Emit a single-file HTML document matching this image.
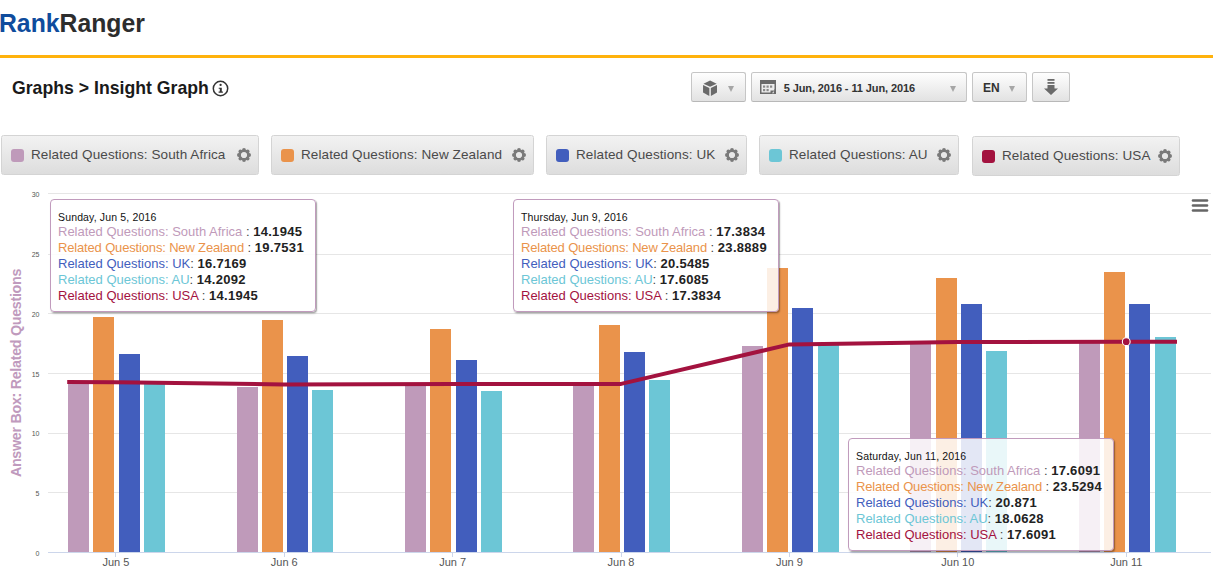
<!DOCTYPE html>
<html><head><meta charset="utf-8"><style>
*{box-sizing:border-box}
html,body{margin:0;padding:0;background:#fff;width:1213px;height:585px;overflow:hidden;position:relative;font-family:"Liberation Sans", sans-serif}
.abs{position:absolute}
.logo{position:absolute;left:-0.6px;top:8px;font-size:25px;font-weight:bold;letter-spacing:0px;line-height:30px;transform:scaleX(0.99);transform-origin:0 0}
.rule{position:absolute;left:0;top:55px;width:1213px;height:3px;background:#ffb20c}
.h1{position:absolute;left:12px;top:76.5px;font-size:19px;font-weight:bold;color:#1a1a1a;line-height:22px;white-space:nowrap;transform:scaleX(0.93);transform-origin:0 0}
.btn{position:absolute;top:72px;height:30px;border:1px solid #c6c6c6;border-bottom-color:#b8b8b8;border-radius:2.5px;background:linear-gradient(#fefefe,#e2e2e2);}
.tri{position:absolute;width:0;height:0;border-left:3.5px solid transparent;border-right:3.5px solid transparent;border-top:6px solid #a6a6a6}
.lg{position:absolute;height:40px;border:1px solid #d4d4d4;border-radius:2.5px;background:linear-gradient(#f2f2f2,#dddddd);white-space:nowrap}
.sw{position:absolute;left:8.8px;top:12.5px;width:13.7px;height:13.8px;border-radius:3px}
.lt{position:absolute;left:29px;top:10.5px;font-size:13.5px;line-height:16px;color:#4a4a4a;letter-spacing:0.1px}
.gear{position:absolute;right:7px;top:12px;width:14px;height:14px}
.gear svg{display:block}
.tt{position:absolute;border:1px solid #c19bbd;border-radius:4px;background:rgba(255,255,255,0.85);box-shadow:1px 1px 1px rgba(0,0,0,0.25),1px 2px 2px rgba(0,0,0,0.15);padding:8px 0 0 7px;white-space:nowrap}
.th{font-size:10.5px;line-height:14px;color:#111;margin-top:2px;letter-spacing:0.15px}
.tr{font-size:13px;line-height:16px;height:16px}
.tr .sep{color:#444}
.tr b{color:#222;letter-spacing:0.3px}
.nz{letter-spacing:-0.16px}
</style></head><body>
<div class="logo"><span style="color:#0f4c9d">Rank</span><span style="color:#2d2d2d">Ranger</span></div>
<div class="rule"></div>
<div class="h1">Graphs &gt; Insight Graph</div>
<svg class="abs" style="left:212.2px;top:79.6px" width="17" height="17" viewBox="0 0 17 17"><circle cx="8.5" cy="8.5" r="7.2" fill="none" stroke="#333" stroke-width="1.5"/><circle cx="8.6" cy="4.9" r="1.15" fill="#333"/><path d="M6.7 7.7h3.1v3.9h1.1v1.2H6.6v-1.2h1.2V8.8H6.7z" fill="#333"/></svg>

<div class="btn" style="left:691px;width:55px"></div>
<div class="btn" style="left:751px;width:216px"></div>
<div class="btn" style="left:972px;width:55px"></div>
<div class="btn" style="left:1032px;width:38px"></div>
<svg class="abs" style="left:702.8px;top:79.8px" width="14.2" height="16" viewBox="0 0 15 17"><path fill="#6a6a6a" d="M7.5 0.5L14.5 4 7.5 7.3 .5 4z"/><path fill="#6a6a6a" d="M0 5.3l6.7 3.2v8.5L0 13.3z"/><path fill="#6a6a6a" d="M15 5.3L8.3 8.5v8.5L15 13.3z"/></svg>
<div class="tri" style="left:728px;top:86px"></div>
<svg class="abs" style="left:760px;top:80px" width="16" height="14" viewBox="0 0 16 14"><rect x="0" y="0" width="16" height="14" fill="#6a6a6a"/><rect x="1.5" y="4" width="13" height="8.5" fill="#ececec"/><g fill="#8a8a8a"><rect x="3" y="5.5" width="2.2" height="2.2"/><rect x="6.5" y="5.5" width="2.2" height="2.2"/><rect x="10" y="5.5" width="2.2" height="2.2"/><rect x="3" y="9" width="2.2" height="2.2"/><rect x="6.5" y="9" width="2.2" height="2.2"/></g><path d="M10.5 14V10.5H14.5V9H16V14z" fill="#6a6a6a"/><path d="M12 13.2l1.8-2.2v2.2z" fill="#ececec"/></svg>
<div class="abs" style="left:783.7px;top:81px;font-size:11px;font-weight:bold;color:#333;line-height:14px;white-space:nowrap;letter-spacing:-0.1px">5 Jun, 2016 - 11 Jun, 2016</div>
<div class="tri" style="left:950px;top:86px"></div>
<div class="abs" style="left:983px;top:81px;font-size:12px;font-weight:bold;color:#333;line-height:14px">EN</div>
<div class="tri" style="left:1009px;top:86px"></div>
<svg class="abs" style="left:1044px;top:79px" width="14" height="16" viewBox="0 0 14 16"><g fill="#6a6a6a"><rect x="3.5" y="0" width="7" height="1.8"/><rect x="3.5" y="3" width="7" height="1.8"/><path d="M3.5 6h7v3.5H14L7 16 0 9.5h3.5z"/></g></svg>

<div class="lg" style="left:1px;top:135px;width:258px"><span class="sw" style="background:#bf9aba"></span><span class="lt">Related Questions: South Africa</span><span class="gear"><svg width="14" height="14" viewBox="0 0 14 14"><g fill="#7a7a7a"><circle cx="12.10" cy="7.00" r="1.9"/><circle cx="10.61" cy="10.61" r="1.9"/><circle cx="7.00" cy="12.10" r="1.9"/><circle cx="3.39" cy="10.61" r="1.9"/><circle cx="1.90" cy="7.00" r="1.9"/><circle cx="3.39" cy="3.39" r="1.9"/><circle cx="7.00" cy="1.90" r="1.9"/><circle cx="10.61" cy="3.39" r="1.9"/></g><circle cx="7" cy="7" r="4.25" fill="none" stroke="#7a7a7a" stroke-width="2.3"/></svg></span></div>
<div class="lg" style="left:271px;top:135px;width:263px"><span class="sw" style="background:#ea934b"></span><span class="lt">Related Questions: New Zealand</span><span class="gear"><svg width="14" height="14" viewBox="0 0 14 14"><g fill="#7a7a7a"><circle cx="12.10" cy="7.00" r="1.9"/><circle cx="10.61" cy="10.61" r="1.9"/><circle cx="7.00" cy="12.10" r="1.9"/><circle cx="3.39" cy="10.61" r="1.9"/><circle cx="1.90" cy="7.00" r="1.9"/><circle cx="3.39" cy="3.39" r="1.9"/><circle cx="7.00" cy="1.90" r="1.9"/><circle cx="10.61" cy="3.39" r="1.9"/></g><circle cx="7" cy="7" r="4.25" fill="none" stroke="#7a7a7a" stroke-width="2.3"/></svg></span></div>
<div class="lg" style="left:546px;top:135px;width:201px"><span class="sw" style="background:#425ebd"></span><span class="lt">Related Questions: UK</span><span class="gear"><svg width="14" height="14" viewBox="0 0 14 14"><g fill="#7a7a7a"><circle cx="12.10" cy="7.00" r="1.9"/><circle cx="10.61" cy="10.61" r="1.9"/><circle cx="7.00" cy="12.10" r="1.9"/><circle cx="3.39" cy="10.61" r="1.9"/><circle cx="1.90" cy="7.00" r="1.9"/><circle cx="3.39" cy="3.39" r="1.9"/><circle cx="7.00" cy="1.90" r="1.9"/><circle cx="10.61" cy="3.39" r="1.9"/></g><circle cx="7" cy="7" r="4.25" fill="none" stroke="#7a7a7a" stroke-width="2.3"/></svg></span></div>
<div class="lg" style="left:759px;top:135px;width:200px"><span class="sw" style="background:#6cc6d6"></span><span class="lt">Related Questions: AU</span><span class="gear"><svg width="14" height="14" viewBox="0 0 14 14"><g fill="#7a7a7a"><circle cx="12.10" cy="7.00" r="1.9"/><circle cx="10.61" cy="10.61" r="1.9"/><circle cx="7.00" cy="12.10" r="1.9"/><circle cx="3.39" cy="10.61" r="1.9"/><circle cx="1.90" cy="7.00" r="1.9"/><circle cx="3.39" cy="3.39" r="1.9"/><circle cx="7.00" cy="1.90" r="1.9"/><circle cx="10.61" cy="3.39" r="1.9"/></g><circle cx="7" cy="7" r="4.25" fill="none" stroke="#7a7a7a" stroke-width="2.3"/></svg></span></div>
<div class="lg" style="left:972px;top:136px;width:208px"><span class="sw" style="background:#a3123f"></span><span class="lt">Related Questions: USA</span><span class="gear"><svg width="14" height="14" viewBox="0 0 14 14"><g fill="#7a7a7a"><circle cx="12.10" cy="7.00" r="1.9"/><circle cx="10.61" cy="10.61" r="1.9"/><circle cx="7.00" cy="12.10" r="1.9"/><circle cx="3.39" cy="10.61" r="1.9"/><circle cx="1.90" cy="7.00" r="1.9"/><circle cx="3.39" cy="3.39" r="1.9"/><circle cx="7.00" cy="1.90" r="1.9"/><circle cx="10.61" cy="3.39" r="1.9"/></g><circle cx="7" cy="7" r="4.25" fill="none" stroke="#7a7a7a" stroke-width="2.3"/></svg></span></div>

<svg class="abs" style="left:0;top:0" width="1213" height="585" viewBox="0 0 1213 585" font-family='"Liberation Sans", sans-serif'>
<rect x="48" y="193" width="1163" height="1" fill="#e6e6e6"/>
<rect x="48" y="254" width="1163" height="1" fill="#e6e6e6"/>
<rect x="48" y="313" width="1163" height="1" fill="#e6e6e6"/>
<rect x="48" y="373" width="1163" height="1" fill="#e6e6e6"/>
<rect x="48" y="433" width="1163" height="1" fill="#e6e6e6"/>
<rect x="48" y="492" width="1163" height="1" fill="#e6e6e6"/>
<text x="39.5" y="197.4" text-anchor="end" font-size="7" fill="#555">30</text>
<text x="39.5" y="257.1" text-anchor="end" font-size="7" fill="#555">25</text>
<text x="39.5" y="316.8" text-anchor="end" font-size="7" fill="#555">20</text>
<text x="39.5" y="376.5" text-anchor="end" font-size="7" fill="#555">15</text>
<text x="39.5" y="436.2" text-anchor="end" font-size="7" fill="#555">10</text>
<text x="39.5" y="495.9" text-anchor="end" font-size="7" fill="#555">5</text>
<text x="39.5" y="555.6" text-anchor="end" font-size="7" fill="#555">0</text>
<rect x="68" y="384" width="21" height="168.5" fill="#bf9aba"/>
<rect x="93" y="317" width="21" height="235.5" fill="#ea934b"/>
<rect x="119" y="354" width="21" height="198.5" fill="#425ebd"/>
<rect x="144" y="384" width="21" height="168.5" fill="#6cc6d6"/>
<rect x="237" y="387" width="21" height="165.5" fill="#bf9aba"/>
<rect x="262" y="320" width="21" height="232.5" fill="#ea934b"/>
<rect x="287" y="356" width="21" height="196.5" fill="#425ebd"/>
<rect x="312" y="390" width="21" height="162.5" fill="#6cc6d6"/>
<rect x="405" y="386" width="21" height="166.5" fill="#bf9aba"/>
<rect x="430" y="329" width="21" height="223.5" fill="#ea934b"/>
<rect x="456" y="360" width="21" height="192.5" fill="#425ebd"/>
<rect x="481" y="391" width="21" height="161.5" fill="#6cc6d6"/>
<rect x="573" y="386" width="21" height="166.5" fill="#bf9aba"/>
<rect x="599" y="325" width="21" height="227.5" fill="#ea934b"/>
<rect x="624" y="352" width="21" height="200.5" fill="#425ebd"/>
<rect x="649" y="380" width="21" height="172.5" fill="#6cc6d6"/>
<rect x="742" y="346" width="21" height="206.5" fill="#bf9aba"/>
<rect x="767" y="268" width="21" height="284.5" fill="#ea934b"/>
<rect x="792" y="308" width="21" height="244.5" fill="#425ebd"/>
<rect x="818" y="343" width="21" height="209.5" fill="#6cc6d6"/>
<rect x="910" y="344" width="21" height="208.5" fill="#bf9aba"/>
<rect x="936" y="278" width="21" height="274.5" fill="#ea934b"/>
<rect x="961" y="304" width="21" height="248.5" fill="#425ebd"/>
<rect x="986" y="351" width="21" height="201.5" fill="#6cc6d6"/>
<rect x="1079" y="343" width="21" height="209.5" fill="#bf9aba"/>
<rect x="1104" y="272" width="21" height="280.5" fill="#ea934b"/>
<rect x="1129" y="304" width="21" height="248.5" fill="#425ebd"/>
<rect x="1155" y="337" width="21" height="215.5" fill="#6cc6d6"/>
<rect x="48" y="552" width="1163" height="1" fill="#ccd6eb"/>
<rect x="115" y="552" width="1" height="5" fill="#ccd6eb"/>
<text x="115.85" y="566" text-anchor="middle" font-size="11" fill="#555">Jun 5</text>
<rect x="284" y="552" width="1" height="5" fill="#ccd6eb"/>
<text x="284.25" y="566" text-anchor="middle" font-size="11" fill="#555">Jun 6</text>
<rect x="452" y="552" width="1" height="5" fill="#ccd6eb"/>
<text x="452.65" y="566" text-anchor="middle" font-size="11" fill="#555">Jun 7</text>
<rect x="621" y="552" width="1" height="5" fill="#ccd6eb"/>
<text x="621.0500000000001" y="566" text-anchor="middle" font-size="11" fill="#555">Jun 8</text>
<rect x="789" y="552" width="1" height="5" fill="#ccd6eb"/>
<text x="789.45" y="566" text-anchor="middle" font-size="11" fill="#555">Jun 9</text>
<rect x="957" y="552" width="1" height="5" fill="#ccd6eb"/>
<text x="957.85" y="566" text-anchor="middle" font-size="11" fill="#555">Jun 10</text>
<rect x="1126" y="552" width="1" height="5" fill="#ccd6eb"/>
<text x="1126.25" y="566" text-anchor="middle" font-size="11" fill="#555">Jun 11</text>
<path d="M67.2 382.1 L115.8 382.3 L284.2 384.4 L452.6 383.9 L621.1 383.9 L789.5 344.4 L957.9 342.1 L1126.2 341.7 L1177.0 341.7" fill="none" stroke="#a3123f" stroke-width="4" stroke-linejoin="round"/><circle cx="1126.25" cy="341.7" r="3.9" fill="#a3123f" stroke="#fff" stroke-width="1.1"/>
<text transform="translate(21.3 373) rotate(-90)" text-anchor="middle" font-size="14.3" letter-spacing="-0.3" font-weight="bold" fill="#c09abd">Answer Box: Related Questions</text>
<g stroke="#666" stroke-width="2.6" stroke-linecap="round"><line x1="1193" y1="200.5" x2="1207" y2="200.5"/><line x1="1193" y1="205.5" x2="1207" y2="205.5"/><line x1="1193" y1="210.5" x2="1207" y2="210.5"/></g>
</svg>

<div class="tt" style="left:50px;top:199px;width:266px;height:113px">
<div class="th">Sunday, Jun 5, 2016</div><div class="tr"><span style="color:#bf9aba">Related Questions: South Africa</span><span class="sep"> : </span><b>14.1945</b></div><div class="tr"><span style="color:#ea934b" class="nz">Related Questions: New Zealand</span><span class="sep"> : </span><b>19.7531</b></div><div class="tr"><span style="color:#425ebd">Related Questions: UK</span><span class="sep">: </span><b>16.7169</b></div><div class="tr"><span style="color:#6cc6d6">Related Questions: AU</span><span class="sep">: </span><b>14.2092</b></div><div class="tr"><span style="color:#a3123f">Related Questions: USA</span><span class="sep"> : </span><b>14.1945</b></div></div>
<div class="tt" style="left:513px;top:199px;width:266px;height:113px">
<div class="th">Thursday, Jun 9, 2016</div><div class="tr"><span style="color:#bf9aba">Related Questions: South Africa</span><span class="sep"> : </span><b>17.3834</b></div><div class="tr"><span style="color:#ea934b" class="nz">Related Questions: New Zealand</span><span class="sep"> : </span><b>23.8889</b></div><div class="tr"><span style="color:#425ebd">Related Questions: UK</span><span class="sep">: </span><b>20.5485</b></div><div class="tr"><span style="color:#6cc6d6">Related Questions: AU</span><span class="sep">: </span><b>17.6085</b></div><div class="tr"><span style="color:#a3123f">Related Questions: USA</span><span class="sep"> : </span><b>17.3834</b></div></div>
<div class="tt" style="left:848px;top:438px;width:266px;height:113px">
<div class="th">Saturday, Jun 11, 2016</div><div class="tr"><span style="color:#bf9aba">Related Questions: South Africa</span><span class="sep"> : </span><b>17.6091</b></div><div class="tr"><span style="color:#ea934b" class="nz">Related Questions: New Zealand</span><span class="sep"> : </span><b>23.5294</b></div><div class="tr"><span style="color:#425ebd">Related Questions: UK</span><span class="sep">: </span><b>20.871</b></div><div class="tr"><span style="color:#6cc6d6">Related Questions: AU</span><span class="sep">: </span><b>18.0628</b></div><div class="tr"><span style="color:#a3123f">Related Questions: USA</span><span class="sep"> : </span><b>17.6091</b></div></div>
</body></html>
